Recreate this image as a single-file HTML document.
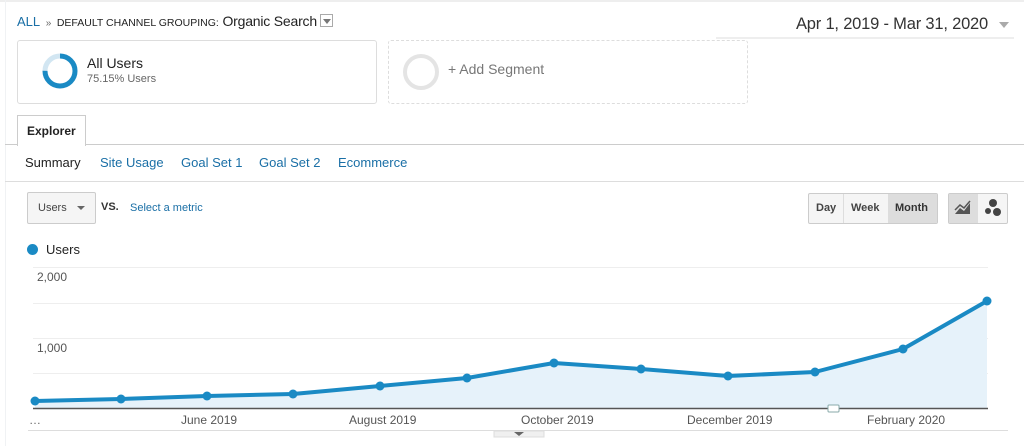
<!DOCTYPE html>
<html><head><meta charset="utf-8"><style>
*{margin:0;padding:0;box-sizing:border-box}
body{width:1024px;height:446px;background:#fff;font-family:"Liberation Sans",sans-serif;position:relative;overflow:hidden;color:#222}
.a{position:absolute;white-space:nowrap}
.blue{color:#1a6fa6}
</style></head><body>
<div class="a" style="left:0;top:0;width:1024px;height:2px;background:#eee"></div>
<div class="a" style="left:5px;top:0;width:1px;height:446px;background:#f0f2f4"></div>

<div class="a" style="left:17px;top:13px;font-size:13px"><span class="blue">ALL</span><span style="color:#666;font-size:10px">&nbsp;&nbsp;»&nbsp;&nbsp;</span><span style="font-size:10.5px">DEFAULT CHANNEL GROUPING:</span> <span style="font-size:14px;letter-spacing:-0.2px">Organic Search</span></div>
<div class="a" style="left:320px;top:14px;width:13px;height:13px;border:1px solid #aaa"><div style="margin:4px 0 0 2px;width:0;height:0;border-left:4px solid transparent;border-right:4px solid transparent;border-top:5px solid #777"></div></div>

<div class="a" style="left:796px;top:15px;font-size:16.5px;color:#333;letter-spacing:-0.2px">Apr 1, 2019 - Mar 31, 2020</div>
<div class="a" style="left:999px;top:22px;width:0;height:0;border-left:5px solid transparent;border-right:5px solid transparent;border-top:6px solid #aaa"></div>
<div class="a" style="left:716px;top:37px;width:298px;height:2px;background:#eee"></div>

<div class="a" style="left:17px;top:40px;width:360px;height:64px;border:1px solid #ddd;border-radius:3px"></div>
<svg class="a" style="left:42px;top:53px" width="36" height="36"><circle cx="18" cy="18" r="15" fill="none" stroke="#d2e6f2" stroke-width="5"/><circle cx="18" cy="18" r="15" fill="none" stroke="#1a8ac4" stroke-width="5" stroke-dasharray="70.8 94.2" transform="rotate(-90 18 18)"/></svg>
<div class="a" style="left:87px;top:55px;font-size:14px">All Users</div>
<div class="a" style="left:87px;top:73px;font-size:11px;color:#666">75.15% Users</div>

<div class="a" style="left:388px;top:40px;width:360px;height:64px;border:1px dashed #ddd;border-radius:3px"></div>
<div class="a" style="left:403px;top:54px;width:36px;height:36px;border:4px solid #e4e4e4;border-radius:50%"></div>
<div class="a" style="left:448px;top:61px;font-size:14px;color:#777">+ Add Segment</div>

<div class="a" style="left:5px;top:144px;width:1019px;height:1px;background:#ccc"></div>
<div class="a" style="left:17px;top:115px;width:69px;height:31px;border:1px solid #ccc;border-bottom:none;background:#fff;font-size:12px;font-weight:bold;padding:8px 0 0 9px">Explorer</div>

<div class="a" style="left:25px;top:155px;font-size:13px">Summary</div>
<div class="a blue" style="left:100px;top:155px;font-size:13px">Site Usage</div>
<div class="a blue" style="left:181px;top:155px;font-size:13px">Goal Set 1</div>
<div class="a blue" style="left:259px;top:155px;font-size:13px">Goal Set 2</div>
<div class="a blue" style="left:338px;top:155px;font-size:13px">Ecommerce</div>
<div class="a" style="left:5px;top:181px;width:1019px;height:1px;background:#ddd"></div>

<div class="a" style="left:27px;top:192px;width:69px;height:32px;border:1px solid #ccc;border-radius:2px;background:#f5f5f5;font-size:11px;color:#444;padding:9px 0 0 10px">Users</div>
<div class="a" style="left:77px;top:206px;width:0;height:0;border-left:4px solid transparent;border-right:4px solid transparent;border-top:4px solid #666"></div>
<div class="a" style="left:101px;top:201px;font-size:11px;font-weight:bold;color:#333">VS.</div>
<div class="a blue" style="left:130px;top:202px;font-size:11px">Select a metric</div>

<div class="a" style="left:808px;top:193px;width:130px;height:31px;border:1px solid #ccc;border-radius:2px;background:#f5f5f5"></div>
<div class="a" style="left:843px;top:194px;width:1px;height:29px;background:#ddd"></div>
<div class="a" style="left:888px;top:194px;width:49px;height:29px;background:#ddd"></div>
<div class="a" style="left:816px;top:202px;font-size:11px;font-weight:bold;color:#444">Day</div>
<div class="a" style="left:851px;top:202px;font-size:11px;font-weight:bold;color:#444">Week</div>
<div class="a" style="left:895px;top:202px;font-size:11px;font-weight:bold;color:#333">Month</div>
<div class="a" style="left:948px;top:193px;width:60px;height:31px;border:1px solid #ccc;border-radius:2px;background:#f5f5f5"></div>
<div class="a" style="left:949px;top:194px;width:29px;height:29px;background:#ddd"></div>
<svg class="a" style="left:953px;top:198px" width="20" height="20"><path d="M2 16 L7 10 L11 13 L17 5 L17 16 Z" fill="#555"/><path d="M2 12 L7 7 L11 10 L17 3" fill="none" stroke="#555" stroke-width="1.5"/></svg>
<svg class="a" style="left:982px;top:197px" width="22" height="22"><circle cx="11" cy="6" r="4" fill="#444"/><circle cx="6" cy="14" r="3" fill="#444"/><circle cx="15" cy="15" r="4" fill="#444"/></svg>

<div class="a" style="left:27px;top:244px;width:11px;height:11px;border-radius:50%;background:#1a8ac4"></div>
<div class="a" style="left:46px;top:242px;font-size:13px">Users</div>

<svg class="a" style="left:0;top:0" width="1024" height="446">
<g stroke="#eee" stroke-width="1"><line x1="33" y1="267.5" x2="988" y2="267.5"/><line x1="33" y1="303.5" x2="988" y2="303.5"/><line x1="33" y1="338.5" x2="988" y2="338.5"/><line x1="33" y1="373.5" x2="988" y2="373.5"/></g>
<path d="M35 401 L121 399 L207 396 L293 394 L380 386 L467 378 L554 363 L641 369 L728 376 L815 372 L903 349 L987 301 L987 408 L35 408 Z" fill="#e6f2fa"/>
<line x1="33" y1="408.5" x2="988" y2="408.5" stroke="#555" stroke-width="1.5"/>
<path d="M35 401 L121 399 L207 396 L293 394 L380 386 L467 378 L554 363 L641 369 L728 376 L815 372 L903 349 L987 301" fill="none" stroke="#1a8ac4" stroke-width="4" stroke-linejoin="round"/>
<g fill="#1a8ac4"><circle cx="35" cy="401" r="4.5"/><circle cx="121" cy="399" r="4.5"/><circle cx="207" cy="396" r="4.5"/><circle cx="293" cy="394" r="4.5"/><circle cx="380" cy="386" r="4.5"/><circle cx="467" cy="378" r="4.5"/><circle cx="554" cy="363" r="4.5"/><circle cx="641" cy="369" r="4.5"/><circle cx="728" cy="376" r="4.5"/><circle cx="815" cy="372" r="4.5"/><circle cx="903" cy="349" r="4.5"/><circle cx="987" cy="301" r="4.5"/></g>
<rect x="828" y="405" width="11" height="7" rx="1" fill="#fff" stroke="#8aa" stroke-width="1"/>
<line x1="28" y1="430.5" x2="1008" y2="430.5" stroke="#ddd"/>
<path d="M494 431 L544 431 L544 437 L494 437 Z" fill="#f0f0f0" stroke="#ddd"/>
<path d="M514 432 L524 432 L519 436 Z" fill="#666"/>
</svg>
<div class="a" style="left:37px;top:270px;font-size:12px;color:#555">2,000</div>
<div class="a" style="left:37px;top:341px;font-size:12px;color:#555">1,000</div>
<div class="a" style="left:29px;top:413px;font-size:12px;color:#666">…</div>
<div class="a" style="left:181px;top:413px;font-size:12px;color:#555">June 2019</div>
<div class="a" style="left:349px;top:413px;font-size:12px;color:#555">August 2019</div>
<div class="a" style="left:521px;top:413px;font-size:12px;color:#555">October 2019</div>
<div class="a" style="left:687px;top:413px;font-size:12px;color:#555">December 2019</div>
<div class="a" style="left:867px;top:413px;font-size:12px;color:#555">February 2020</div>
</body></html>
